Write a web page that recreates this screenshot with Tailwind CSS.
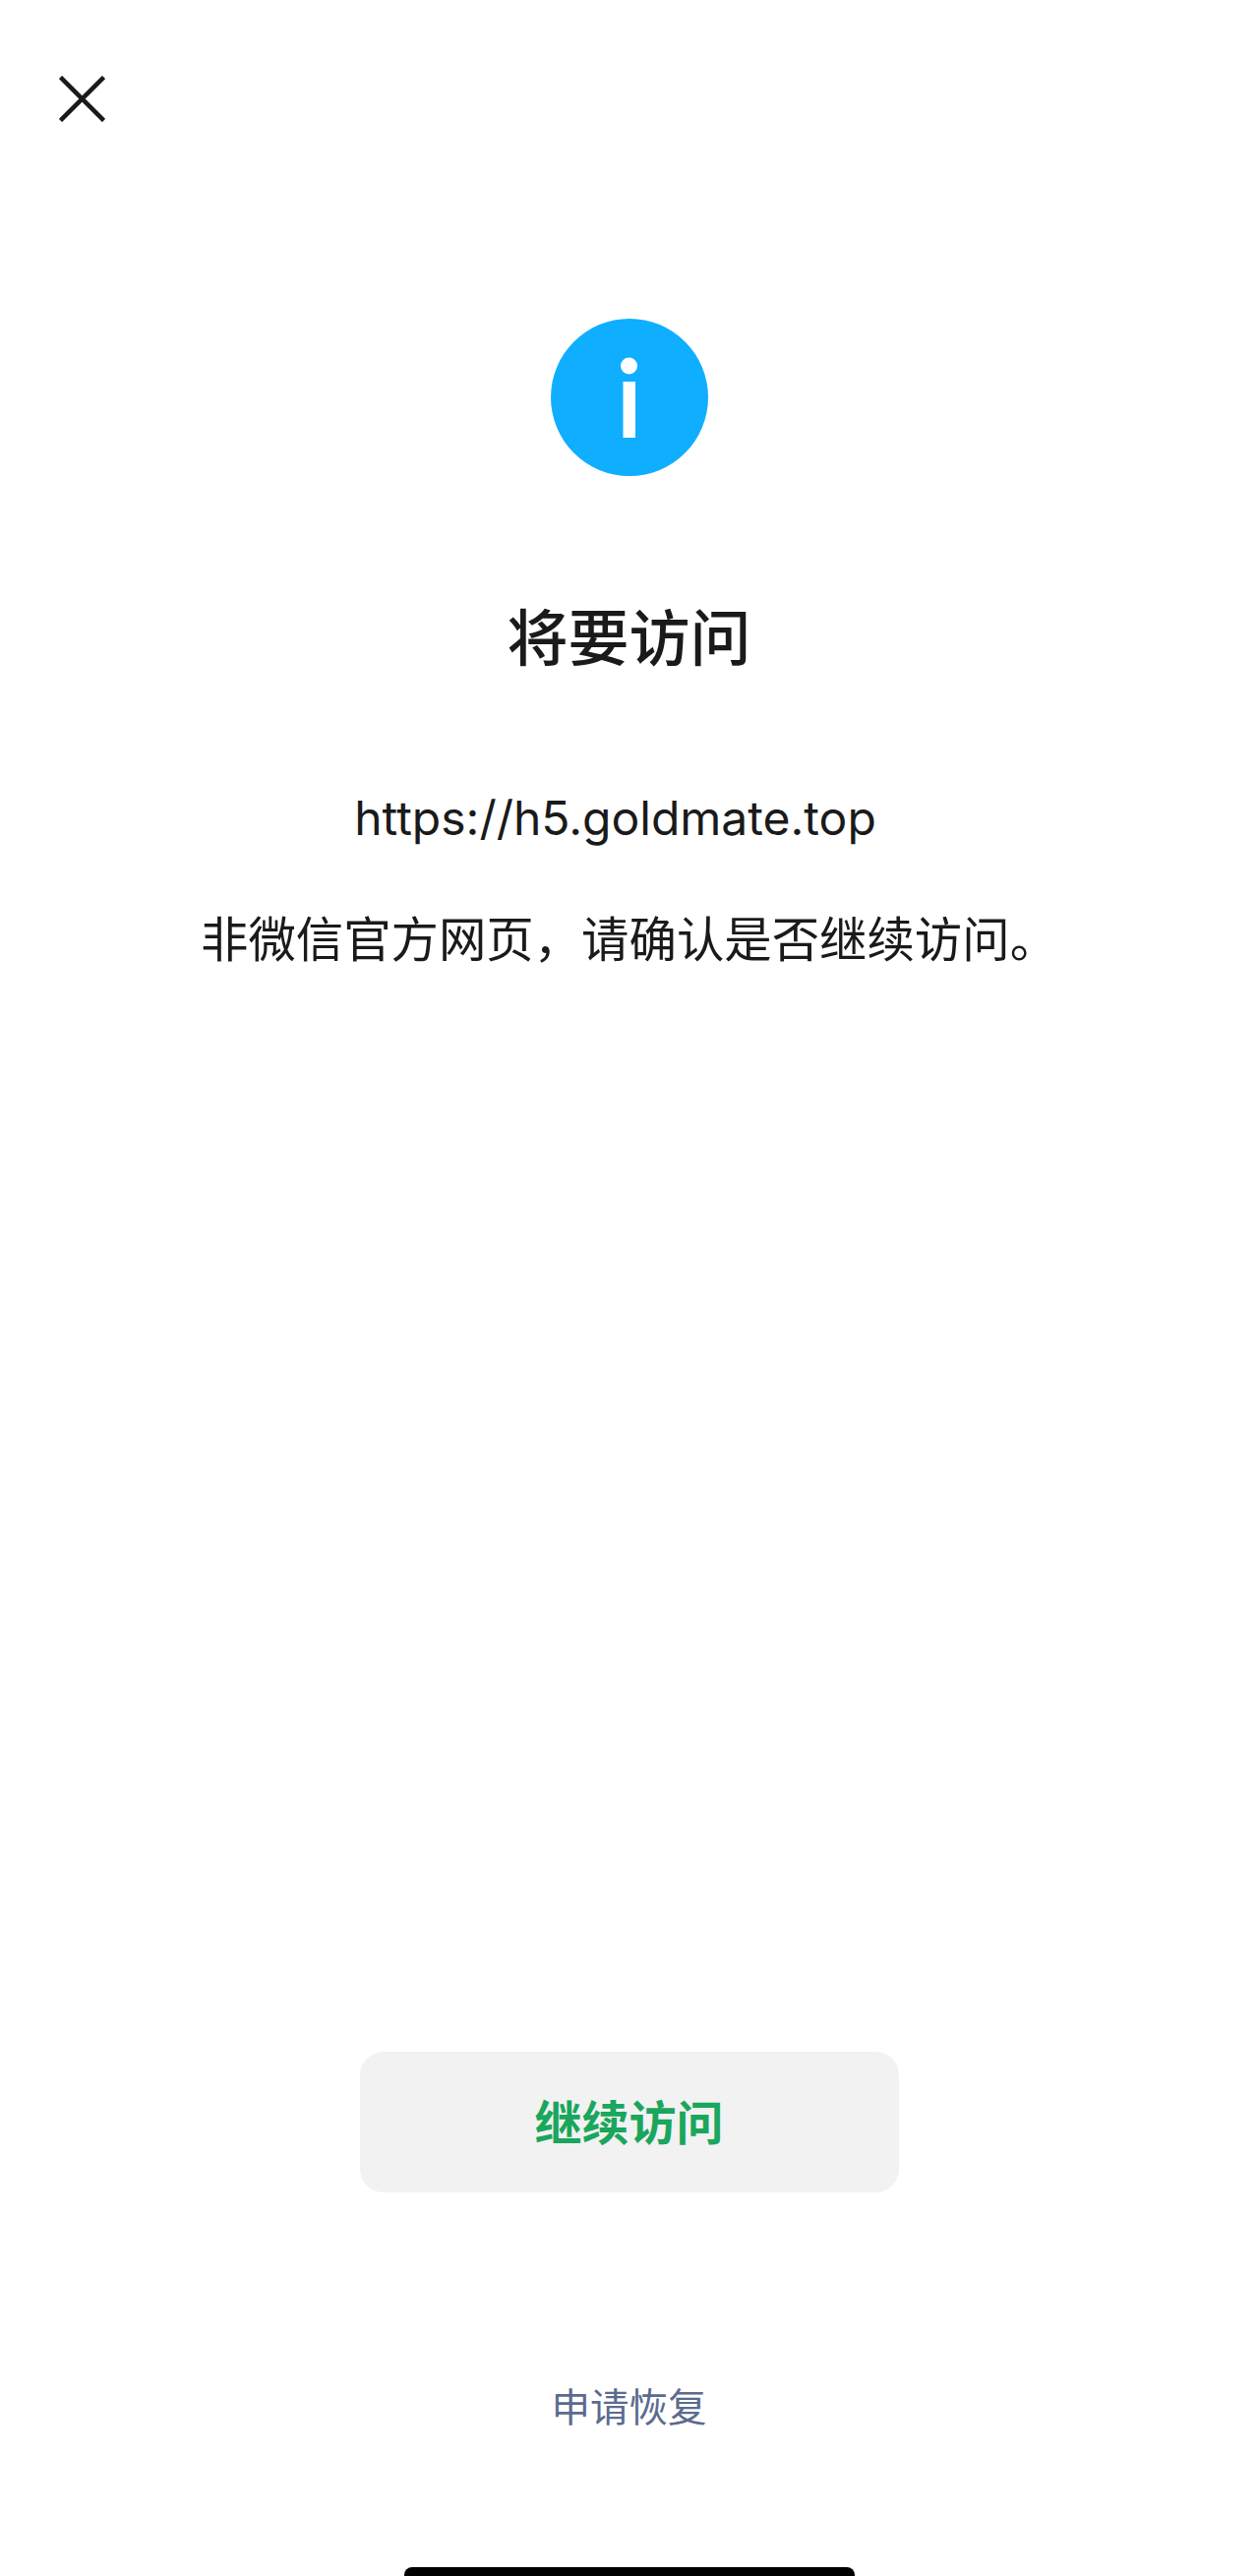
<!DOCTYPE html>
<html lang="zh-CN">
<head>
  <meta charset="UTF-8">
  <meta name="viewport" content="width=device-width, initial-scale=1.0">
  <title>将要访问</title>
  <script src="https://cdn.jsdelivr.net/npm/@tailwindcss/browser@4"></script>
</head>
<body class="bg-white">
  <div class="flex flex-col items-center h-[2619px] overflow-hidden font-['Inter','Noto_Sans_CJK_SC',sans-serif] text-[#1a1a1a]">
    <!-- Close -->
    <div class="w-full pl-[60px] pt-[77px]">
      <svg class="w-[47px] h-[47px]" viewBox="0 0 47 47" fill="none" stroke="#1a1a1a" stroke-width="4.5" stroke-linecap="butt">
        <path d="M1.5 1.5 45.5 45.5M45.5 1.5 1.5 45.5"/>
      </svg>
    </div>

    <!-- Info icon -->
    <svg class="mt-[200px] w-[160px] h-[160px]" viewBox="0 0 160 160">
      <circle cx="80" cy="80" r="80" fill="#10aeff"/>
      <circle cx="79.5" cy="48" r="8.5" fill="#fff"/>
      <rect x="73.5" y="64" width="12.5" height="57" fill="#fff"/>
    </svg>

    <h1 class="mt-[121px] text-[62px] leading-[80px] font-medium font-['Noto_Sans_CJK_SC',sans-serif]">将要访问</h1>

    <p class="mt-[117px] pr-[28px] text-[48px] leading-[60px] font-normal">https://h5.goldmate.top</p>
    <p class="mt-[60px] text-[48.4px] leading-[60px] font-['Noto_Sans_CJK_SC',sans-serif]">非微信官方网页，请确认是否继续访问。</p>

    <button class="mt-[1104px] flex items-center justify-center w-[548px] h-[143px] pb-[6px] rounded-[24px] bg-[#f2f2f2] text-[48px] font-bold text-[#1aa65c] font-['Noto_Sans_CJK_SC',sans-serif]">继续访问</button>

    <a class="mt-[188px] text-[39.5px] leading-[56px] text-[#5b6b8f] font-['Noto_Sans_CJK_SC',sans-serif]">申请恢复</a>

    <div class="mt-auto w-[458px] h-[9px] bg-black rounded-t-[8px]"></div>
  </div>
</body>
</html>
